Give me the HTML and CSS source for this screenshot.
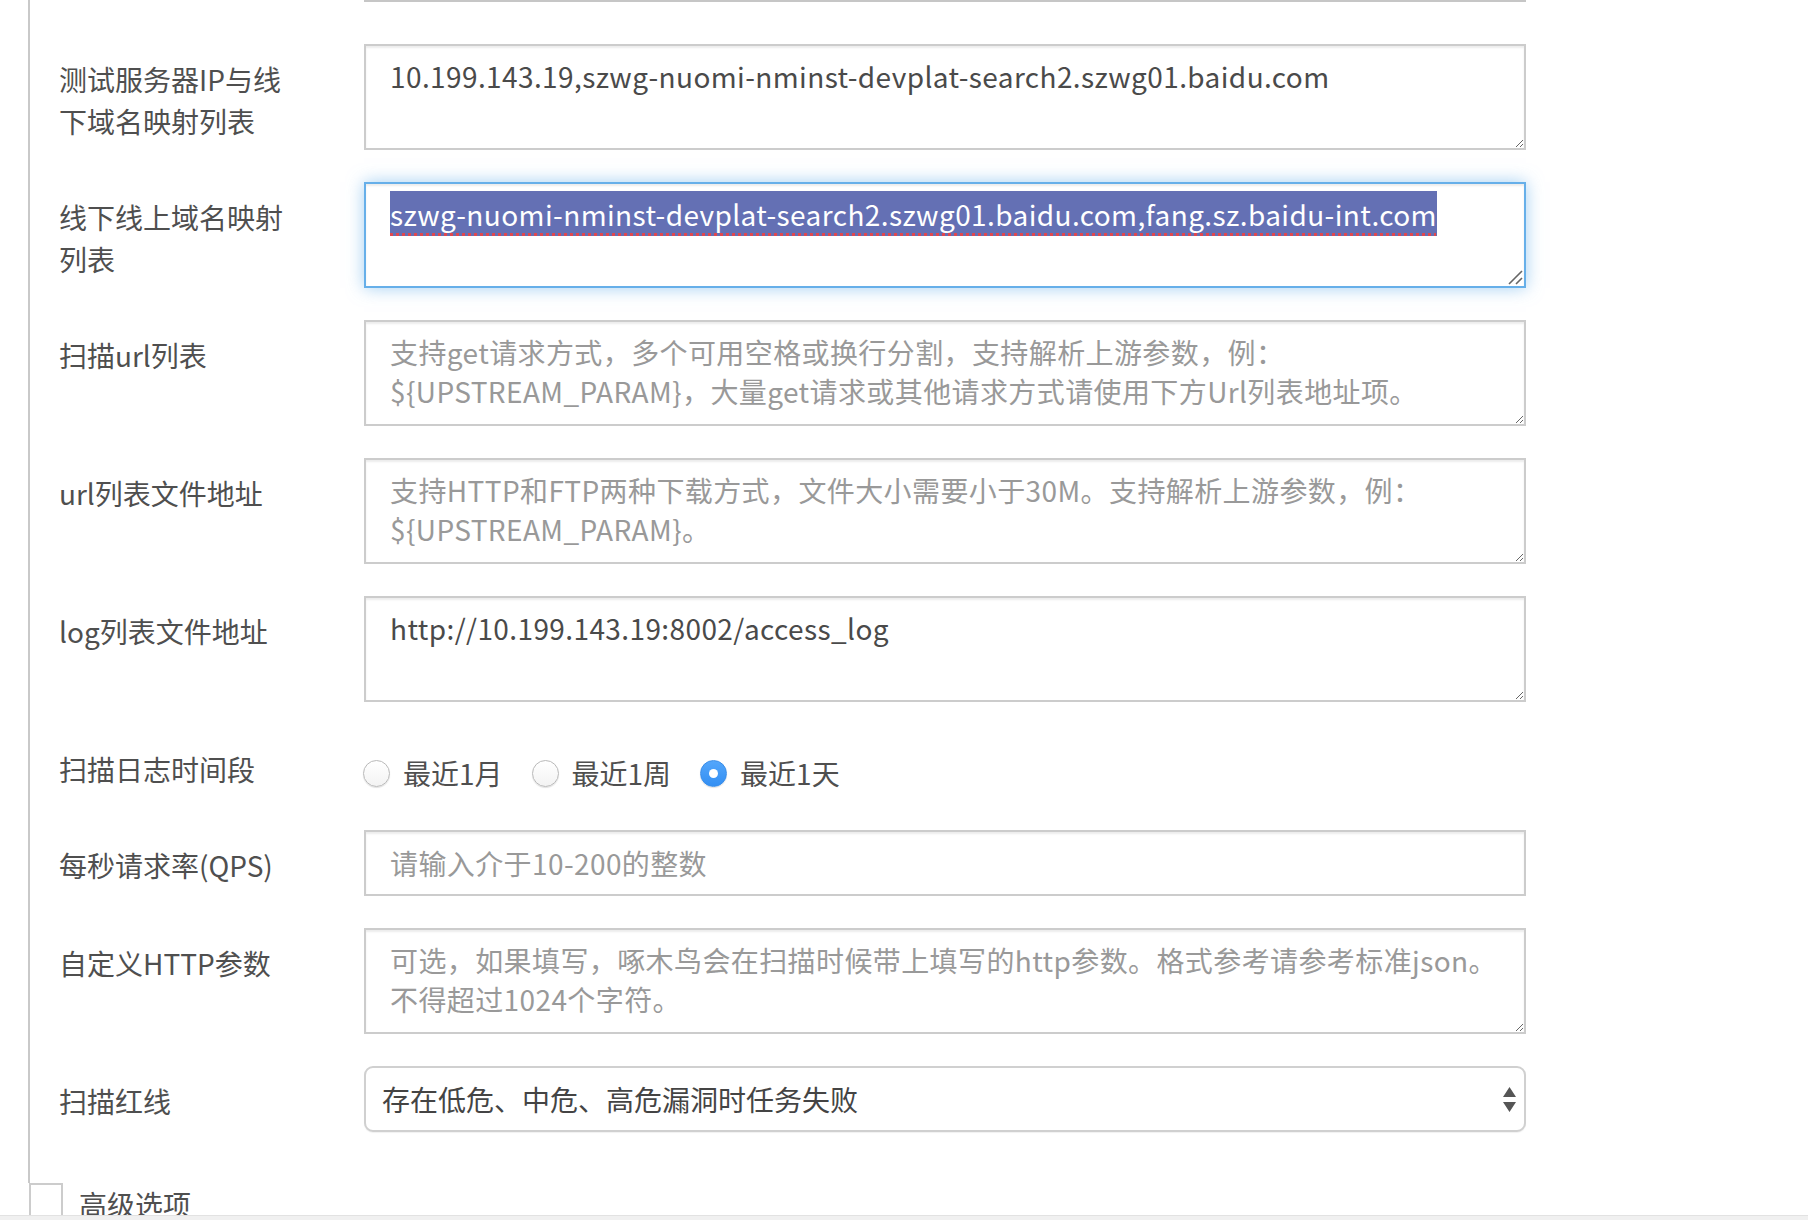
FILE: index.html
```html
<!DOCTYPE html>
<html lang="zh-CN">
<head>
<meta charset="utf-8">
<title>扫描任务配置</title>
<link rel="stylesheet" href="styles.css">
</head>
<body>
<div class="page">
  <div class="panel">
    <div class="stub"></div>

    <div class="row">
      <label class="label">测试服务器IP与线下域名映射列表</label>
      <textarea class="field textarea">10.199.143.19,szwg-nuomi-nminst-devplat-search2.szwg01.baidu.com</textarea>
    </div>

    <div class="row">
      <label class="label">线下线上域名映射列表</label>
      <div class="field textarea focus"><span class="sel">szwg-nuomi-nminst-devplat-search2.szwg01.baidu.com,fang.sz.baidu-int.com</span><svg class="grip" width="16" height="16" viewBox="0 0 16 16"><path d="M2 15 L15 2 M9 15 L15 9" stroke="#666" stroke-width="1.6" fill="none"/></svg></div>
    </div>

    <div class="row">
      <label class="label">扫描url列表</label>
      <textarea class="field textarea" placeholder="支持get请求方式，多个可用空格或换行分割，支持解析上游参数，例：${UPSTREAM_PARAM}，大量get请求或其他请求方式请使用下方Url列表地址项。"></textarea>
    </div>

    <div class="row">
      <label class="label">url列表文件地址</label>
      <textarea class="field textarea" placeholder="支持HTTP和FTP两种下载方式，文件大小需要小于30M。支持解析上游参数，例：${UPSTREAM_PARAM}。"></textarea>
    </div>

    <div class="row">
      <label class="label">log列表文件地址</label>
      <textarea class="field textarea">http://10.199.143.19:8002/access_log</textarea>
    </div>

    <div class="row row-radio">
      <label class="label">扫描日志时间段</label>
      <div class="radios">
        <label class="radio"><span class="dot"></span><span>最近1月</span></label>
        <label class="radio"><span class="dot"></span><span>最近1周</span></label>
        <label class="radio"><span class="dot checked"></span><span>最近1天</span></label>
      </div>
    </div>

    <div class="row">
      <label class="label">每秒请求率(QPS)</label>
      <input class="field input" type="text" placeholder="请输入介于10-200的整数">
    </div>

    <div class="row">
      <label class="label">自定义HTTP参数</label>
      <textarea class="field textarea" placeholder="可选，如果填写，啄木鸟会在扫描时候带上填写的http参数。格式参考请参考标准json。不得超过1024个字符。"></textarea>
    </div>

    <div class="row">
      <label class="label">扫描红线</label>
      <div class="select-wrap">
        <select class="field select">
          <option>存在低危、中危、高危漏洞时任务失败</option>
        </select>
        <svg class="arrows" width="13" height="25" viewBox="0 0 13 25"><path d="M6.5 0 L13 10 L0 10 Z M0 15 L13 15 L6.5 25 Z" fill="#555"/></svg>
      </div>
    </div>
  </div>

  <div class="advanced">
    <span class="checkbox"></span>
    <span class="adv-text">高级选项</span>
  </div>
</div>
<div class="statusbar"></div>
</body>
</html>
```

FILE: styles.css
```css
html, body {
  margin: 0;
  padding: 0;
  background: #fff;
}

body {
  font-family: "Noto Sans CJK SC", "Noto Sans", sans-serif;
  color: #4f4f4f;
  overflow: hidden;
  height: 1220px;
}

.page {
  padding-left: 28px;
}

.panel {
  border-left: 2px solid #c9c9c9;
  padding-left: 29px;
  padding-bottom: 51px;
}

.stub {
  margin-left: 305px;
  width: 1162px;
  height: 2px;
  background: #c6c6c6;
  margin-bottom: 42px;
}

.row {
  display: flex;
  align-items: flex-start;
  margin-bottom: 32px;
}

.row:last-child {
  margin-bottom: 0;
}

.label {
  flex: 0 0 305px;
  box-sizing: border-box;
  padding: 14px 65px 0 0;
  font-size: 28px;
  line-height: 42px;
  color: #4f4f4f;
}

.field {
  box-sizing: border-box;
  width: 1162px;
  margin: 0;
  border: 2px solid #cccccc;
  border-radius: 0;
  background: #fff;
  font-family: "Noto Sans CJK SC", "Noto Sans", sans-serif;
  font-size: 28px;
  letter-spacing: 0.4px;
  color: #4a4a4a;
  outline: none;
  box-shadow: inset 0 2px 2px rgba(0, 0, 0, 0.075);
}

.textarea {
  height: 106px;
  padding: 11px 24px;
  line-height: 39px;
  resize: vertical;
  display: block;
}

.field::placeholder {
  color: #999;
  opacity: 1;
}

.focus {
  position: relative;
  border-color: #66afe9;
  box-shadow: inset 0 2px 2px rgba(0, 0, 0, 0.075), 0 0 16px rgba(102, 175, 233, 0.6);
}

.sel {
  background: #6470b4;
  color: #fff;
  text-decoration-line: underline;
  text-decoration-style: dotted;
  text-decoration-color: #e0474f;
  text-decoration-thickness: 3px;
  text-underline-offset: 7px;
  padding: 3px 0 2px;
}

.grip {
  position: absolute;
  right: 1px;
  bottom: 1px;
}

.row-radio {
  min-height: 64px;
}

.radios {
  display: flex;
  align-items: center;
  padding-top: 25px;
  margin-left: -1px;
}

.radio {
  display: flex;
  align-items: center;
  gap: 13px;
  margin-right: 29px;
  font-size: 28px;
  line-height: 28px;
  color: #4f4f4f;
}

.dot {
  box-sizing: border-box;
  width: 27px;
  height: 27px;
  border-radius: 50%;
  border: 1px solid #b9b9b9;
  background: linear-gradient(#ffffff, #f3f3f3);
  box-shadow: 0 1px 1px rgba(0, 0, 0, 0.12);
  display: flex;
  align-items: center;
  justify-content: center;
}

.dot.checked {
  border-color: #3a8de8;
  background: linear-gradient(#53a6fb, #338ff3);
}

.dot.checked::after {
  content: "";
  width: 9px;
  height: 9px;
  border-radius: 50%;
  background: #fff;
}

.input {
  height: 66px;
  padding: 0 24px;
  line-height: 62px;
}

.select-wrap {
  position: relative;
  width: 1162px;
}

.select {
  height: 66px;
  padding: 0 50px 0 16px;
  letter-spacing: 0;
  border-color: #d0d0d0;
  border-radius: 9px;
  -webkit-appearance: none;
  appearance: none;
  color: #444;
  box-shadow: 0 1px 1px rgba(0, 0, 0, 0.06);
}

.arrows {
  position: absolute;
  right: 10px;
  top: 21px;
  pointer-events: none;
}

.advanced {
  display: flex;
  align-items: flex-start;
  gap: 16px;
  margin-left: 1px;
}

.checkbox {
  box-sizing: border-box;
  width: 34px;
  height: 34px;
  border: 2px solid #cccccc;
  background: #fff;
  flex: 0 0 34px;
}

.adv-text {
  font-size: 28px;
  line-height: 42px;
  color: #4f4f4f;
}

.statusbar {
  position: fixed;
  left: 0;
  right: 0;
  bottom: 0;
  height: 4px;
  background: #f0f0f0;
  border-top: 1px solid #e2e2e2;
}
```
